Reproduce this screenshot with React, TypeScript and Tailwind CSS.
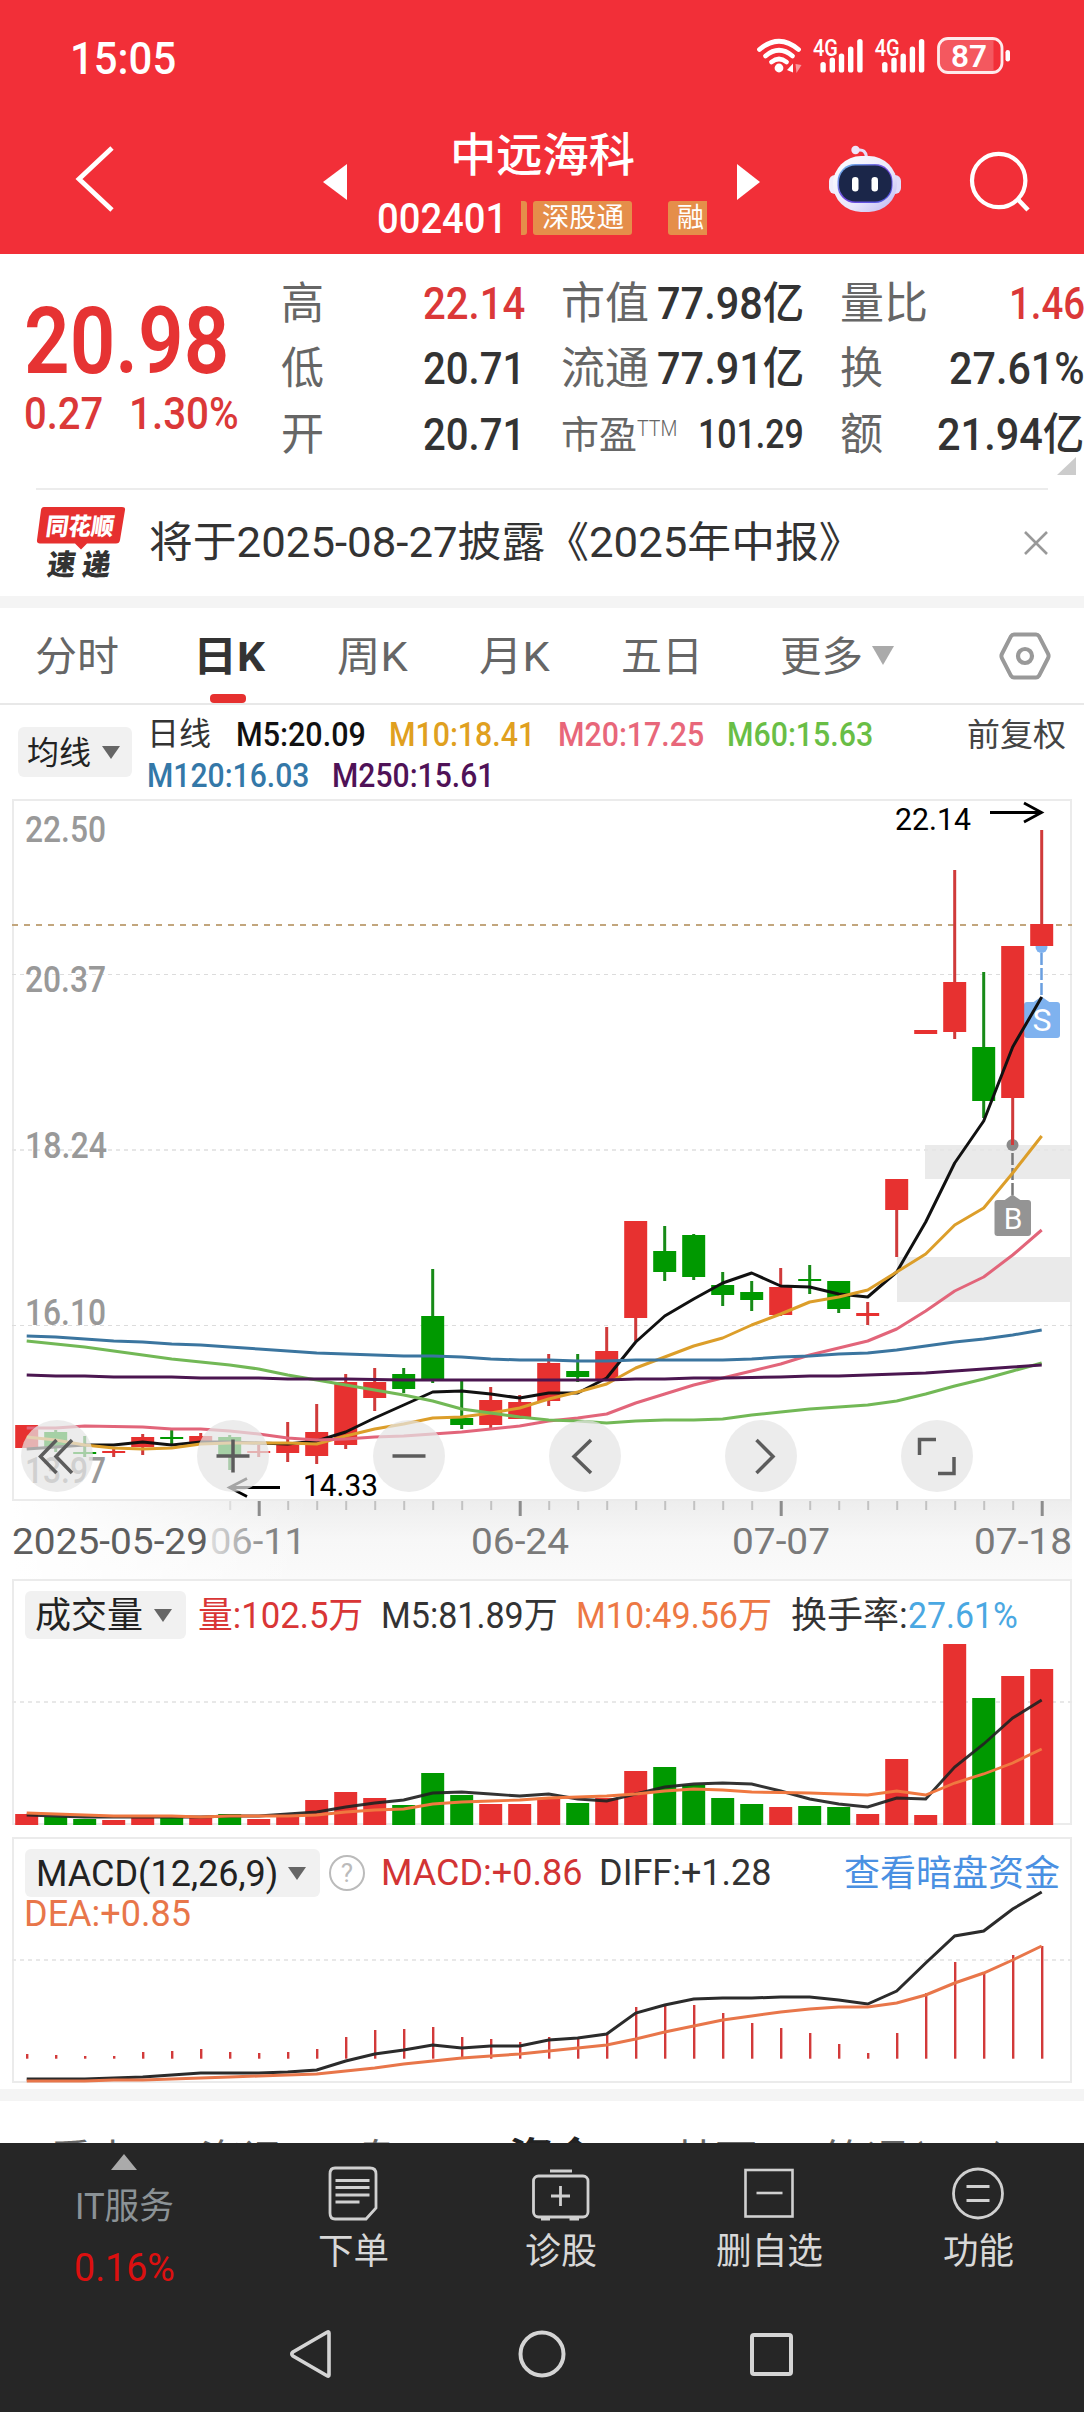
import { useLayoutEffect, useRef, type ReactNode } from "react";

/** Text squeezed or stretched horizontally so that it fills its box. */
function Fit({ className = "", children }: { className?: string; children: ReactNode }) {
  const box = useRef<HTMLDivElement>(null);
  const text = useRef<HTMLSpanElement>(null);
  useLayoutEffect(() => {
    if (box.current && text.current) {
      const ratio = box.current.clientWidth / text.current.offsetWidth;
      text.current.style.transform = `scaleX(${ratio})`;
    }
  });
  return (
    <div ref={box} className={`flex shrink-0 items-center ${className}`}>
      <span ref={text} className="inline-block shrink-0 origin-left whitespace-nowrap">
        {children}
      </span>
    </div>
  );
}

const RED = "#e73130";
const GREEN = "#009900";
const x = (i: number) => 26.7 + 29 * i;
const line = (ys: number[]) => ys.map((y, i) => `${x(i).toFixed(1)},${y}`).join(" ");

// [rising, body top, body bottom, wick top, wick bottom]
const candles: [number, number, number, number, number][] = [
  [1, 1425, 1448, 1425, 1448], [0, 1432, 1447, 1430, 1452], [0, 1452, 1454, 1436, 1457], [1, 1451, 1453, 1448, 1457],
  [1, 1437, 1447, 1434, 1455], [0, 1437, 1439, 1430, 1445], [1, 1436, 1442, 1433, 1442], [0, 1437, 1455, 1435, 1470],
  [1, 1451, 1453, 1445, 1457], [1, 1445, 1453, 1422, 1462], [1, 1432, 1456, 1404, 1464], [1, 1382, 1445, 1374, 1449],
  [1, 1382, 1398, 1368, 1411], [0, 1374, 1389, 1368, 1393], [0, 1316, 1379, 1269, 1383], [0, 1418, 1425, 1381, 1429],
  [1, 1400, 1425, 1387, 1428], [1, 1402, 1419, 1395, 1419], [1, 1363, 1401, 1354, 1406], [0, 1371, 1377, 1354, 1382],
  [1, 1351, 1380, 1327, 1380], [1, 1221, 1318, 1221, 1341], [0, 1251, 1272, 1226, 1281], [0, 1235, 1277, 1234, 1280],
  [0, 1285, 1295, 1272, 1306], [0, 1292, 1300, 1281, 1311], [1, 1287, 1315, 1268, 1316], [0, 1279, 1281, 1265, 1294],
  [0, 1281, 1309, 1281, 1313], [1, 1313, 1316, 1302, 1325], [1, 1179, 1210, 1179, 1257], [1, 1030, 1034, 1030, 1034],
  [1, 982, 1032, 870, 1039], [0, 1047, 1101, 972, 1118], [1, 946, 1098, 946, 1145], [1, 924, 946, 830, 946],
];
const ma5 = [1449, 1447, 1445, 1445, 1442, 1445, 1442, 1442, 1443, 1444, 1441, 1432, 1418, 1405, 1392, 1391, 1394, 1398, 1393, 1393, 1378, 1342, 1316, 1299, 1283, 1273, 1286, 1287, 1294, 1297, 1272, 1222, 1163, 1121, 1047, 997];
const ma10 = [1437, 1440, 1445, 1448, 1449, 1448, 1444, 1443, 1443, 1443, 1444, 1436, 1429, 1424, 1418, 1417, 1413, 1408, 1399, 1392, 1384, 1368, 1357, 1346, 1338, 1325, 1314, 1302, 1297, 1290, 1272, 1254, 1225, 1208, 1173, 1136];
const ma20 = [1428, 1428, 1426, 1426.5, 1427, 1429, 1429, 1431, 1434, 1438, 1440, 1439, 1437, 1436, 1434, 1432, 1429, 1426, 1421, 1418, 1414, 1403, 1394, 1385, 1378, 1371, 1364, 1355, 1348, 1341, 1329, 1311, 1291, 1277, 1255, 1230];
const ma60 = [1341, 1344, 1347, 1351, 1355, 1359, 1362, 1365, 1369, 1375, 1380, 1385, 1390, 1395, 1401, 1409, 1413, 1417, 1420, 1421, 1423, 1421, 1420, 1420, 1419, 1415, 1412, 1409, 1407, 1405, 1401, 1394, 1386, 1379, 1371, 1363];
const ma120 = [1336, 1337, 1339, 1341, 1342, 1344, 1345, 1347, 1349, 1351, 1353, 1354, 1355, 1356, 1356, 1357, 1359, 1360, 1360, 1361, 1361, 1360, 1360, 1360, 1360, 1359, 1357, 1356, 1354, 1353, 1350, 1346, 1342, 1339, 1335, 1330];
const ma250 = [1375, 1376, 1376, 1377, 1377, 1377, 1378, 1378, 1378, 1379, 1379, 1379, 1379.5, 1380, 1380, 1380, 1380, 1380, 1380, 1380, 1380, 1379, 1379, 1378, 1378, 1377.5, 1377, 1376, 1376, 1375, 1374, 1373, 1371, 1369, 1367, 1365];

const volume = [1814, 1817, 1819, 1820, 1817, 1818, 1817, 1814, 1819, 1814, 1800, 1792, 1798, 1805, 1773, 1795, 1804, 1804, 1798, 1803, 1798, 1771, 1767, 1785, 1798, 1804, 1807, 1806, 1807, 1814, 1759, 1815, 1644, 1698, 1676, 1669];
const vol5 = [1815, 1816, 1817, 1817, 1817, 1817, 1817, 1816, 1816, 1814, 1812, 1807, 1803, 1800, 1793, 1792, 1794, 1796, 1794, 1799, 1801, 1794, 1787, 1784, 1783, 1784, 1791, 1799, 1804, 1807, 1798, 1799, 1767, 1744, 1718, 1700];
const vol10 = [1813, 1814, 1815, 1816, 1816, 1816, 1817, 1816, 1816, 1816, 1815, 1812, 1810, 1809, 1804, 1802, 1801, 1800, 1798, 1797, 1796, 1794, 1791, 1789, 1790, 1792, 1792.5, 1793, 1794, 1795, 1791, 1795, 1783, 1774, 1763, 1749];

const macd = [2054, 2055, 2056, 2056, 2052, 2051, 2049, 2052, 2053, 2052, 2049, 2037, 2030, 2029, 2027, 2037, 2039, 2042, 2037, 2039, 2034, 2007, 2004, 2005, 2013, 2023, 2028, 2033, 2044, 2053, 2033, 1993, 1962, 1973, 1955, 1946];
const diff = [2079, 2079, 2079, 2078, 2077, 2075, 2073, 2073, 2073, 2072, 2070, 2061, 2054, 2050, 2045, 2048, 2046, 2046, 2040, 2038, 2034, 2013, 2005, 1999, 1998, 1998, 1997, 1997, 2000, 2004, 1991, 1963, 1936, 1931, 1909, 1892];
const dea = [2081, 2081, 2081, 2080, 2080, 2079, 2078, 2077, 2076, 2075, 2074, 2071, 2068, 2064, 2061, 2058, 2056, 2054, 2051, 2048, 2045, 2039, 2032, 2026, 2020, 2016, 2012, 2009, 2007, 2007, 2003, 1995, 1983, 1973, 1960, 1946];

function Signal({ dx }: { dx: number }) {
  const bars = [[820.4, 62], [829.6, 57.5], [838.8, 53.5], [848, 46.5], [857.2, 39]];
  return (
    <g transform={`translate(${dx} 0)`}>
      {bars.map(([bx, top]) => (
        <rect key={bx} x={bx} y={top} width="5.4" height={72.5 - top} rx="2.6" />
      ))}
      <text x="813" y="55.5" fontSize="23.5" fontWeight="500" textLength="25" lengthAdjust="spacingAndGlyphs">4G</text>
    </g>
  );
}

function StatusBar() {
  return (
    <div className="flex h-[112px] items-start justify-between pl-[70px]">
      <Fit className="mt-[33px] h-[50px] w-[106px] text-[45px] font-medium">15:05</Fit>
      <svg width="334" height="112" viewBox="750 0 334 112" fill="#fff">
        <g fill="none" stroke="#fff" strokeWidth="4.8" strokeLinecap="round">
          <path d="M759.500 49.500Q779 33 798.500 49.500" />
          <path d="M765.500 56Q779 44.500 792.500 56" />
          <path d="M771.500 62Q779 56 786.500 62" />
        </g>
        <circle cx="779" cy="68" r="4.400" />
        <path d="M793 63.500v9l-6-2.500z" />
        <path d="M795.500 64l6 1-5 8z" opacity=".5" />
        <Signal dx={0} />
        <Signal dx={61.7} />
        <path d="M946 39.500h47.500v32H946q-7-1-7-8v-16q0-7 7-8z" opacity=".2" />
        <rect x="938.500" y="38.500" width="63.500" height="34" rx="9.500" fill="none" stroke="#fff" strokeOpacity=".9" strokeWidth="2.800" />
        <rect x="1005.500" y="50" width="4.500" height="11.500" rx="2.200" />
        <text x="951" y="67" fontSize="32" fontWeight="600" textLength="36" lengthAdjust="spacingAndGlyphs">87</text>
      </svg>
    </div>
  );
}

function Robot() {
  return (
    <svg width="80" height="74" viewBox="825 142 80 74" className="shrink-0">
      <defs>
        <linearGradient id="shell" x1="0" y1="0" x2="1" y2="1">
          <stop offset="0" stopColor="#ffffff" />
          <stop offset=".6" stopColor="#e9e6fb" />
          <stop offset="1" stopColor="#b9b4f2" />
        </linearGradient>
        <linearGradient id="rim" x1="0" y1="0" x2="1" y2="1">
          <stop offset="0" stopColor="#6fc6ee" />
          <stop offset=".5" stopColor="#7447dd" />
          <stop offset="1" stopColor="#4a5ce0" />
        </linearGradient>
      </defs>
      <path d="M866.500 157q-1-8-8-7" fill="none" stroke="#e6dff8" strokeWidth="3" />
      <circle cx="855.500" cy="150" r="4.200" fill="#efe6fa" />
      <rect x="829" y="175" width="14" height="19" rx="6" fill="#f0edfc" />
      <rect x="887" y="175" width="14" height="19" rx="6" fill="#dfdcfb" />
      <rect x="833" y="156" width="64" height="56" rx="28" fill="url(#shell)" />
      <rect x="837.500" y="164" width="55" height="39" rx="17.500" fill="url(#rim)" />
      <rect x="839" y="165.500" width="52.500" height="36" rx="16.500" fill="#1b2649" />
      <rect x="852" y="177" width="6.500" height="14.500" rx="3.200" fill="#fff" />
      <rect x="871.500" y="177" width="6.500" height="14.500" rx="3.200" fill="#fff" />
    </svg>
  );
}

function Header() {
  return (
    <div className="flex h-[142px] items-start pl-[74px] pt-[28px]">
      <svg width="42" height="78" viewBox="74 140 42 78" className="shrink-0">
        <path d="M112 148L79 179l33 31" fill="none" stroke="#fff" strokeWidth="4.800" />
      </svg>
      <svg width="24" height="36" viewBox="0 0 24 36" className="ml-[207px] mt-[24px] shrink-0">
        <path d="M24 0v36L0 18z" fill="#fff" />
      </svg>
      <div className="ml-[30px] flex w-[332px] shrink-0 flex-col">
        <Fit className="-mt-[13px] ml-[73px] h-[56px] w-[185px] text-[46px] font-medium">中远海科</Fit>
        <div className="mt-[18px] flex h-[34px] items-center">
          <Fit className="w-[130px] pt-[1px] text-[42px] font-medium">002401</Fit>
          <div className="ml-[14px] h-[34px] w-[6px] rounded-r-[3px] bg-[#e58e4a]" />
          <div className="ml-[6px] flex h-[34px] w-[99px] items-center justify-center rounded-[3px] bg-[#e58e4a]">
            <Fit className="h-[34px] w-[82px] text-[27px]">深股通</Fit>
          </div>
          <div className="ml-[36px] flex h-[34px] w-[39px] items-center rounded-l-[3px] bg-[#e58e4a] pl-[9px]">
            <Fit className="h-[34px] w-[27px] text-[27px]">融</Fit>
          </div>
        </div>
      </div>
      <svg width="24" height="36" viewBox="0 0 24 36" className="ml-[28px] mt-[24px] shrink-0">
        <path d="M0 0v36l23-18z" fill="#fff" />
      </svg>
      <div className="ml-[64px] mt-[2px]"><Robot /></div>
      <svg width="66" height="66" viewBox="968 148 66 66" className="ml-[63px] mt-[8px] shrink-0">
        <circle cx="998.700" cy="180.500" r="26.700" fill="none" stroke="#fff" strokeWidth="4.200" />
        <path d="M1018 199.500l10 10.500" stroke="#fff" strokeWidth="4.600" />
      </svg>
    </div>
  );
}

function Quote() {
  return (
    <div className="flex h-[234px] text-[44px] font-medium text-[#333]">
      <div className="ml-[24px] w-[257px] shrink-0 text-[#e63333]">
        <Fit className="mt-[41px] h-[94px] w-[205px] text-[92px] font-semibold">20.98</Fit>
        <div className="flex h-[50px] items-center text-[#db3838]">
          <Fit className="w-[79px]">0.27</Fit>
          <Fit className="ml-[26px] w-[110px]">1.30%</Fit>
        </div>
      </div>
      <div className="mt-[17px] w-[280px] shrink-0">
        {[["高", "22.14", "text-[#db3838]"], ["低", "20.71", ""], ["开", "20.71", ""]].map(([k, v, c]) => (
          <div key={k} className="flex h-[65.5px] items-center">
            <Fit className="w-[43px] font-normal text-[#666]">{k}</Fit>
            <Fit className={`ml-[99px] w-[102px] ${c}`}>{v}</Fit>
          </div>
        ))}
      </div>
      <div className="mt-[17px] w-[279px] shrink-0">
        {[["市值", "77.98亿"], ["流通", "77.91亿"]].map(([k, v]) => (
          <div key={k} className="flex h-[65.5px] items-center">
            <Fit className="w-[88px] font-normal text-[#666]">{k}</Fit>
            <Fit className="ml-[8px] w-[147px]">{v}</Fit>
          </div>
        ))}
        <div className="flex h-[65.5px] items-center">
          <Fit className="w-[76px] text-[38px] font-normal text-[#666]">市盈</Fit>
          <Fit className="mb-[12px] w-[40px] text-[22px] font-light text-[#666]">TTM</Fit>
          <Fit className="ml-[21px] w-[106px] text-[40px]">101.29</Fit>
        </div>
      </div>
      <div className="mt-[17px] w-[244px] shrink-0">
        <div className="flex h-[65.5px] items-center">
          <Fit className="w-[88px] font-normal text-[#666]">量比</Fit>
          <Fit className="ml-[81px] w-[76px] text-[#db3838]">1.46</Fit>
        </div>
        <div className="flex h-[65.5px] items-center">
          <Fit className="w-[43px] font-normal text-[#666]">换</Fit>
          <Fit className="ml-[66px] w-[136px]">27.61%</Fit>
        </div>
        <div className="flex h-[65.5px] items-center">
          <Fit className="w-[43px] font-normal text-[#666]">额</Fit>
          <Fit className="ml-[54px] w-[147px]">21.94亿</Fit>
        </div>
        <svg width="19" height="18" viewBox="0 0 19 18" className="-mt-[11px] ml-[217px]">
          <path d="M19 0v18H0z" fill="#ccc" />
        </svg>
      </div>
    </div>
  );
}

function Notice() {
  return (
    <div className="px-[36px]">
      <div className="flex h-[108px] items-center border-t-2 border-[#ececec]">
        <svg width="90" height="76" viewBox="36 504 90 76" className="shrink-0 overflow-visible">
          <path d="M44 506h78q3.500 0 3 3l-5 30q-.5 3.500-4 3.500H87l-6 6-6-6H40q-3.500 0-3-3.500l4-30q.5-3 3-3z" fill="#e6302f" />
          <g transform="skewX(-8)" fontFamily="'Noto Sans CJK SC', sans-serif" fontWeight="900">
            <text x="120" y="534" fontSize="24" fill="#fff" textLength="68" lengthAdjust="spacingAndGlyphs">同花顺</text>
            <text x="127" y="574.500" fontSize="29" fill="#333" textLength="28" lengthAdjust="spacingAndGlyphs">速</text>
            <text x="162" y="574.500" fontSize="29" fill="#333" textLength="28" lengthAdjust="spacingAndGlyphs">递</text>
          </g>
        </svg>
        <Fit className="ml-[23px] w-[713px] text-[42px] text-[#333]">将于2025-08-27披露《2025年中报》</Fit>
        <svg width="24" height="24" viewBox="0 0 24 24" className="ml-auto shrink-0">
          <path d="M1 1l22 22M23 1L1 23" stroke="#999" strokeWidth="2.600" />
        </svg>
      </div>
    </div>
  );
}

function Tabs() {
  return (
    <div className="flex h-[97px] items-center border-b-2 border-[#e8e8e8] pl-[35px] text-[41px] text-[#666]">
      <Fit className="w-[84px] pt-[3px]">分时</Fit>
      <div className="relative ml-[74px] flex h-full items-center">
        <Fit className="w-[72px] pt-[3px] font-bold text-[#333]">日K</Fit>
        <div className="absolute bottom-0 left-[17px] h-[9px] w-[36px] rounded-[4px] bg-[#e6302f]" />
      </div>
      <Fit className="ml-[72px] w-[71px] pt-[3px]">周K</Fit>
      <Fit className="ml-[71px] w-[71px] pt-[3px]">月K</Fit>
      <Fit className="ml-[71px] w-[82px] pt-[3px]">五日</Fit>
      <Fit className="ml-[77px] w-[83px] pt-[3px]">更多</Fit>
      <svg width="22" height="19" viewBox="0 0 22 19" className="ml-[9px]"><path d="M0 0h22L11 19z" fill="#aaa" /></svg>
      <svg width="52" height="50" viewBox="0 0 52 50" className="ml-[105px]">
        <path d="M15 3.500h22q2 0 3 1.700l9 17.500q1.200 2.300 0 4.600l-9 17.500q-1 1.700-3 1.700H15q-2 0-3-1.700L3 27.300q-1.200-2.300 0-4.600l9-17.500q1-1.700 3-1.700z" fill="none" stroke="#999" strokeWidth="4" />
        <circle cx="26" cy="25" r="7" fill="none" stroke="#999" strokeWidth="4.200" />
      </svg>
    </div>
  );
}

function Legend() {
  return (
    <div className="flex h-[91px] items-start pl-[18px] text-[34px] font-medium">
      <div className="mt-[22px] flex h-[50px] w-[114px] shrink-0 items-center rounded-[6px] bg-[#f1f1f1] pl-[9px]">
        <Fit className="w-[64px] pt-[1px] text-[32px] font-normal text-[#222]">均线</Fit>
        <svg width="18" height="13" viewBox="0 0 18 13" className="ml-[11px]"><path d="M0 0h18L9 13z" fill="#666" /></svg>
      </div>
      <div className="ml-[15px] mt-[9px] w-[820px] shrink-0">
        <div className="flex h-[40px] items-center">
          <Fit className="w-[64px] text-[32px] font-normal text-[#333]">日线</Fit>
          <Fit className="ml-[25px] w-[130px] text-[#111]">M5:20.09</Fit>
          <Fit className="ml-[23px] w-[146px] text-[#e0a020]">M10:18.41</Fit>
          <Fit className="ml-[23px] w-[146px] text-[#e8677a]">M20:17.25</Fit>
          <Fit className="ml-[23px] w-[146px] text-[#69be46]">M60:15.63</Fit>
        </div>
        <div className="flex h-[42px] items-center">
          <Fit className="w-[162px] text-[#3478a8]">M120:16.03</Fit>
          <Fit className="ml-[23px] w-[162px] text-[#4f1257]">M250:15.61</Fit>
        </div>
      </div>
      <Fit className="mt-[10px] h-[40px] w-[99px] text-[32px] font-normal text-[#444]">前复权</Fit>
    </div>
  );
}

function Label({ x: lx, y, w, size, fill, weight = 500, children }: { x: number; y: number; w: number; size: number; fill: string; weight?: number; children: string }) {
  return (
    <text x={lx} y={y} fontSize={size} fill={fill} fontWeight={weight} textLength={w} lengthAdjust="spacingAndGlyphs">
      {children}
    </text>
  );
}

function PriceChart() {
  return (
    <svg width="1084" height="783" viewBox="0 796 1084 783" className="block shrink-0">
      <defs>
        <linearGradient id="axisV" x1="0" y1="0" x2="0" y2="1">
          <stop offset="0" stopColor="#ededed" />
          <stop offset=".5" stopColor="#f7f7f7" />
          <stop offset="1" stopColor="#fafafa" />
        </linearGradient>
        <linearGradient id="axisH">
          <stop offset="0" stopColor="#fff" />
          <stop offset="1" stopColor="#fff" stopOpacity="0" />
        </linearGradient>
        <linearGradient id="fade" gradientUnits="userSpaceOnUse" x1="205" y1="0" x2="270" y2="0">
          <stop offset="0" stopColor="#e6e6e6" />
          <stop offset="1" stopColor="#848484" />
        </linearGradient>
      </defs>
      <rect x="13" y="1500" width="1059" height="79" fill="url(#axisV)" />
      <rect x="12" y="1500" width="300" height="79" fill="url(#axisH)" />
      <rect x="13" y="800" width="1058" height="700" fill="#fff" stroke="#ebebeb" strokeWidth="2" />
      <rect x="925" y="1145" width="147" height="34" fill="#eaeaea" />
      <rect x="897" y="1257" width="175" height="45" fill="#eaeaea" />
      <g stroke="#dcdcdc" strokeDasharray="4 4">
        <path d="M12 974.500h1060M12 1325.500h1060" strokeWidth="1" />
        <path d="M12 1150h1060" strokeWidth="2" stroke="#e6e6e6" />
      </g>
      <path d="M12 925h1060" stroke="#c2a67d" strokeWidth="2" strokeDasharray="6 6" />

      <Label x={25} y={842} w={81} size={36.5} fill="#999">22.50</Label>
      <Label x={25} y={992} w={81} size={36.5} fill="#999">20.37</Label>
      <Label x={25} y={1158} w={82} size={36.5} fill="#999">18.24</Label>
      <Label x={25} y={1325} w={81} size={36.5} fill="#999">16.10</Label>
      <Label x={25} y={1483} w={81} size={36.5} fill="#999">13.97</Label>

      <circle cx="1041.500" cy="947" r="6" fill="#7fb2ef" />
      <path d="M1041.500 953v43" stroke="#6a9fe0" strokeWidth="2.500" strokeDasharray="12 3" />
      <path d="M1033 1002.500l8.500-6 8.500 6z" fill="#7fb2ef" />
      <rect x="1024" y="1002" width="36" height="36" rx="3" fill="#7fb2ef" />
      <text x="1042" y="1031" fontSize="32" fill="#fff" textAnchor="middle">S</text>

      {candles.map(([up, top, bottom, high, low], i) => (
        <g key={i} fill={up ? RED : GREEN}>
          <rect x={x(i) - 1.5} y={high} width="3" height={low - high} fill={up ? "#d03a3a" : "#178a17"} />
          <rect x={x(i) - 11.5} y={top} width="23" height={bottom - top} />
        </g>
      ))}

      <circle cx="1012.500" cy="1145" r="6" fill="#8a8a8a" />
      <path d="M1012.500 1130v15" stroke="#d03a3a" strokeWidth="3" />
      <path d="M1012.500 1153v44" stroke="#777" strokeWidth="2.500" strokeDasharray="12 3" />

      <g fill="none" strokeWidth="3" strokeLinejoin="round">
        <polyline points={line(ma5)} stroke="#111" />
        <polyline points={line(ma10)} stroke="#dc9e2a" />
        <polyline points={line(ma20)} stroke="#e2657a" />
        <polyline points={line(ma60)} stroke="#72b856" />
        <polyline points={line(ma120)} stroke="#3b759f" />
        <polyline points={line(ma250)} stroke="#4b1650" />
      </g>

      <path d="M1004 1200.500l8.500-6 8.500 6z" fill="#949494" />
      <rect x="994.500" y="1200" width="36.500" height="36" rx="3" fill="#949494" />
      <text x="1013" y="1228.500" fontSize="30" fill="#fff" textAnchor="middle">B</text>

      <Label x={895} y={830} w={76} size={31} fill="#000" weight={400}>22.14</Label>
      <path d="M990 812.500h50M1024 803l17.500 9.500-17.500 9.500" fill="none" stroke="#000" strokeWidth="2.800" />
      <Label x={303} y={1496} w={75} size={31} fill="#000" weight={400}>14.33</Label>
      <path d="M280 1487.500h-50M247 1478.500l-17.500 9 17.500 9" fill="none" stroke="#000" strokeWidth="2.800" />

      {[57, 233, 409, 585, 761, 937].map((cx) => (
        <circle key={cx} cx={cx} cy="1456" r="36" fill="#e4e4e4" fillOpacity=".72" />
      ))}
      <g fill="none" stroke="#5c5c5c" strokeWidth="3.500">
        <path d="M56.500 1440l-16 16.500 16 16.500M72 1440l-16 16.500 16 16.500" />
        <path d="M216.500 1456h33M233 1439.500v33" />
        <path d="M392.500 1456h33" />
        <path d="M591 1440l-17 16.500 17 16.500" />
        <path d="M756.500 1440l16.500 16.500-16.500 16.500" />
        <path d="M936 1439.500h-16.500v15.500M954 1457v16.500h-16" />
      </g>

      {Array.from({ length: 29 }, (_, k) => k + 7).map((i) => {
        const major = (i + 1) % 9 === 0;
        return (
          <rect key={i} x={x(i) + (major ? -1 : -0.5)} y="1501" width={major ? 3 : 2} height={major ? 15 : 9} fill={major ? "#8c8c8c" : i === 7 ? "#ddd" : "#c2c2c2"} />
        );
      })}
      <Label x={12} y={1554} w={196} size={36} fill="#5e5e5e" weight={400}>2025-05-29</Label>
      <Label x={210} y={1554} w={96} size={36} fill="url(#fade)" weight={400}>06-11</Label>
      <Label x={471} y={1554} w={98} size={36} fill="#7a7a7a" weight={400}>06-24</Label>
      <Label x={732} y={1554} w={98} size={36} fill="#7a7a7a" weight={400}>07-07</Label>
      <Label x={974} y={1554} w={98} size={36} fill="#7a7a7a" weight={400}>07-18</Label>
    </svg>
  );
}

function VolumePanel() {
  return (
    <div className="relative h-[258px] text-[36px] font-medium">
      <svg width="1084" height="258" viewBox="0 1579 1084 258" className="absolute left-0 top-0">
        <rect x="13" y="1580" width="1058" height="244" fill="none" stroke="#ebebeb" strokeWidth="2" />
        <path d="M12 1702h1060" stroke="#e8e8e8" strokeWidth="2" strokeDasharray="4 4" />
        {volume.map((top, i) => (
          <rect key={i} x={x(i) - 11.5} y={top} width="23" height={1825 - top} fill={candles[i][0] ? RED : GREEN} />
        ))}
        <polyline points={line(vol5)} fill="none" stroke="#222" strokeOpacity=".92" strokeWidth="2.900" />
        <polyline points={line(vol10)} fill="none" stroke="#f07840" strokeWidth="2.900" />
      </svg>
      <div className="relative flex h-[72px] items-center pl-[25px]">
        <div className="flex h-[48px] w-[161px] items-center rounded-[6px] bg-[#f1f1f1] pl-[10px]">
          <Fit className="w-[108px] pt-[2px] font-normal text-[#222]">成交量</Fit>
          <svg width="18" height="13" viewBox="0 0 18 13" className="ml-[11px]"><path d="M0 0h18L9 13z" fill="#666" /></svg>
        </div>
        <Fit className="ml-[12px] w-[165px] pt-[2px] font-normal text-[#d93636]">量:102.5万</Fit>
        <Fit className="ml-[18px] w-[177px] pt-[2px] font-normal text-[#333]">M5:81.89万</Fit>
        <Fit className="ml-[18px] w-[196px] pt-[2px] font-normal text-[#ed7844]">M10:49.56万</Fit>
        <Fit className="ml-[19px] w-[117px] pt-[2px] font-normal text-[#333]">换手率:</Fit>
        <Fit className="w-[110px] pt-[2px] font-normal text-[#4aa8e2]">27.61%</Fit>
      </div>
    </div>
  );
}

function MacdPanel() {
  return (
    <div className="relative h-[252px] text-[36px]">
      <svg width="1084" height="252" viewBox="0 1837 1084 252" className="absolute left-0 top-0">
        <rect x="13" y="1838" width="1058" height="244" fill="none" stroke="#ebebeb" strokeWidth="2" />
        <path d="M12 1960h1060" stroke="#e8e8e8" strokeWidth="2" strokeDasharray="4 4" />
        {macd.map((top, i) => (
          <rect key={i} x={x(i) - 0.7} y={top} width="2.400" height={2058.700 - top} fill="#d23a3a" />
        ))}
        <polyline points={line(diff)} fill="none" stroke="#2b2b2b" strokeWidth="3" />
        <polyline points={line(dea)} fill="none" stroke="#e8764a" strokeWidth="3" />
      </svg>
      <div className="relative flex h-[60px] items-end pl-[25px]">
        <div className="flex h-[48px] w-[295px] items-center rounded-[6px] bg-[#f1f1f1] pl-[11px]">
          <Fit className="w-[242px] pt-[2px] text-[#222]">MACD(12,26,9)</Fit>
          <svg width="18" height="13" viewBox="0 0 18 13" className="ml-[10px]"><path d="M0 0h18L9 13z" fill="#666" /></svg>
        </div>
        <div className="mb-[6px] ml-[9px] flex h-[36px] w-[36px] items-center justify-center rounded-full border-[2.5px] border-[#bbb] text-[26px] leading-none text-[#bbb]">?</div>
        <Fit className="ml-[16px] h-[48px] w-[201px] text-[#d23434]">MACD:+0.86</Fit>
        <Fit className="ml-[17px] h-[48px] w-[173px] text-[#333]">DIFF:+1.28</Fit>
        <Fit className="ml-[72px] h-[46px] w-[216px] text-[#4a90e2]">查看暗盘资金</Fit>
      </div>
      <Fit className="relative ml-[24px] h-[34px] w-[167px] text-[#e8764a]">DEA:+0.85</Fit>
    </div>
  );
}

function SectionTabs() {
  return (
    <div className="flex h-[42px] items-start overflow-hidden pl-[50px] pt-[38px] text-[42px] leading-[44px] text-[#666]">
      <Fit className="w-[84px]">看点</Fit>
      <Fit className="ml-[66px] w-[84px]">资讯</Fit>
      <Fit className="ml-[71px] w-[84px]">盘口</Fit>
      <Fit className="-mt-[2px] ml-[70px] w-[88px] font-bold text-[#222]">资金</Fit>
      <Fit className="ml-[76px] w-[84px]">基面</Fit>
      <Fit className="ml-[66px] w-[186px]">简况(F10)</Fit>
    </div>
  );
}

function Footer() {
  const label = "h-[48px] text-[36px]";
  return (
    <div className="h-[269px] bg-[#262626] text-[#d8d8d8]">
      <div className="flex h-[160px]">
        <div className="ml-[75px] flex w-[98px] shrink-0 flex-col items-center pt-[11px]">
          <svg width="26" height="16" viewBox="0 0 26 16"><path d="M13 0l13 16H0z" fill="#aaa" /></svg>
          <Fit className="mt-[13px] h-[48px] w-[99px] text-[36px] text-[#8b9296]">IT服务</Fit>
          <Fit className="mt-[13px] h-[48px] w-[101px] text-[38px] text-[#dc1010]">0.16%</Fit>
        </div>
        <div className="ml-[144px] flex w-[72px] shrink-0 flex-col items-center pt-[22px]">
          <svg width="54" height="58" viewBox="327 2165 54 58" fill="none" stroke="#d0d0d0" strokeWidth="2.800">
            <path d="M336 2168h35q6 0 6 6v34l-10 11h-31q-5 0-5-6v-39q0-6 5-6z" />
            <path d="M336.500 2180.500h34M336.500 2187.500h34M336.500 2195h34M336.500 2202h24" />
          </svg>
          <Fit className={`mt-[5px] w-[71px] ${label}`}>下单</Fit>
        </div>
        <div className="ml-[136px] flex w-[72px] shrink-0 flex-col items-center pt-[22px]">
          <svg width="60" height="58" viewBox="532 2165 60 58" fill="none" stroke="#d0d0d0" strokeWidth="2.800">
            <rect x="534.500" y="2176" width="54.500" height="41" rx="5" />
            <path d="M551 2171h22M542 2219h9M570.500 2219h9.500M552 2196h19M561.500 2186v20" />
          </svg>
          <Fit className={`mt-[5px] w-[72px] ${label}`}>诊股</Fit>
        </div>
        <div className="ml-[118px] flex w-[108px] shrink-0 flex-col items-center pt-[22px]">
          <svg width="54" height="58" viewBox="743 2165 54 58" fill="none" stroke="#d0d0d0" strokeWidth="2.600">
            <rect x="746.500" y="2170" width="47" height="46.500" />
            <path d="M757.500 2193h26" />
          </svg>
          <Fit className={`mt-[5px] w-[107px] ${label}`}>删自选</Fit>
        </div>
        <div className="ml-[119px] flex w-[72px] shrink-0 flex-col items-center pt-[22px]">
          <svg width="56" height="58" viewBox="951.500 2165 56 58" fill="none" stroke="#d0d0d0" strokeWidth="2.800">
            <circle cx="979.500" cy="2193.500" r="24.500" />
            <path d="M968 2186.500h23M968 2200.500h23" />
          </svg>
          <Fit className={`mt-[5px] w-[71px] ${label}`}>功能</Fit>
        </div>
      </div>
      <div className="flex h-[102px] items-center">
        <svg width="46" height="52" viewBox="0 0 46 52" className="ml-[288px]">
          <path d="M41 5v42q0 2-2 .7L5 28q-2.500-2 0-4L39 4.300q2-1.300 2 .7z" fill="none" stroke="#d4d4d4" strokeWidth="3.600" />
        </svg>
        <svg width="52" height="52" viewBox="0 0 52 52" className="ml-[182px]">
          <circle cx="26" cy="26" r="21.500" fill="none" stroke="#d4d4d4" strokeWidth="4" />
        </svg>
        <svg width="46" height="46" viewBox="0 0 46 46" className="ml-[180px]">
          <rect x="4" y="4" width="39" height="39" rx="2" fill="none" stroke="#d4d4d4" strokeWidth="4" />
        </svg>
      </div>
    </div>
  );
}

export default function App() {
  return (
    <div className="h-[2412px] w-[1084px] overflow-hidden bg-white font-[Roboto,'Noto_Sans_CJK_SC',sans-serif] leading-none">
      <div className="bg-[#f22f38] text-white [&_svg]:fill-white">
        <StatusBar />
        <Header />
      </div>
      <Quote />
      <Notice />
      <div className="h-[12px] bg-[#f4f4f4]" />
      <Tabs />
      <Legend />
      <PriceChart />
      <VolumePanel />
      <MacdPanel />
      <div className="h-[12px] bg-[#f4f4f4]" />
      <SectionTabs />
      <Footer />
    </div>
  );
}
